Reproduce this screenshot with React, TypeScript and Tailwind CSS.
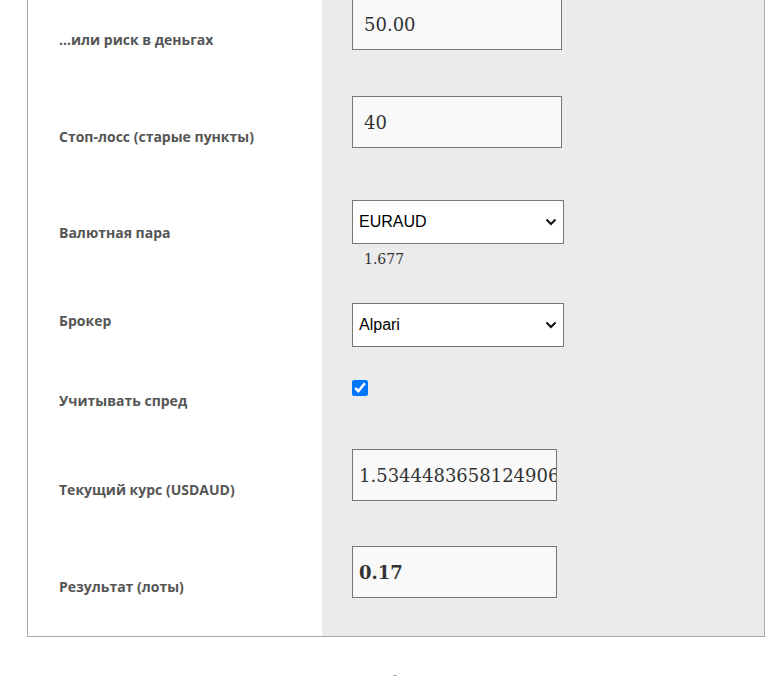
import React from "react";

const labelCls =
  "text-[14px] leading-[20px] font-bold text-[#555] [font-family:'Open_Sans',sans-serif]";
const inputCls =
  "h-[52px] border border-[#777] bg-[#f9f9f9] text-[18px] text-[#333] outline-none [font-family:'DejaVu_Serif','Liberation_Serif',serif]";
const selectCls =
  "block h-[44px] w-[212px] appearance-none border border-[#777] bg-white pl-[6px] pr-[24px] text-[16px] text-black outline-none [font-family:'Liberation_Sans',Arial,sans-serif]";

function Chevron() {
  return (
    <svg
      className="pointer-events-none absolute right-[7px] top-[18px]"
      width="12"
      height="8"
      viewBox="0 0 12 8"
    >
      <path d="M1.5 1.5 L6 6 L10.5 1.5" fill="none" stroke="#111" strokeWidth="2" />
    </svg>
  );
}

function Select({ value, options }: { value: string; options: string[] }) {
  return (
    <div className="relative w-[212px]">
      <select className={selectCls} defaultValue={value}>
        {options.map((o) => (
          <option key={o}>{o}</option>
        ))}
      </select>
      <Chevron />
    </div>
  );
}

function Row({
  h,
  labelTop,
  label,
  children,
}: {
  h: string;
  labelTop: string;
  label: string;
  children: React.ReactNode;
}) {
  return (
    <div className={`flex ${h}`}>
      <div className={`w-[294px] bg-white pl-[31px] ${labelTop}`}>
        <div className={labelCls}>{label}</div>
      </div>
      <div className="flex-1 bg-[#ebebeb] pl-[30px]">{children}</div>
    </div>
  );
}

export default function App() {
  return (
    <div className="h-[676px] overflow-hidden bg-white">
      <div className="-mt-[2px] ml-[27px] w-[738px] border-x border-b border-[#aaa]">
        <Row h="h-[98px]" labelTop="pt-[32px]" label="...или риск в деньгах">
          <input
            className={`${inputCls} w-[210px] pl-[11px]`}
            defaultValue="50.00"
          />
        </Row>
        <Row h="h-[104px]" labelTop="pt-[31px]" label="Стоп-лосс (старые пункты)">
          <input className={`${inputCls} w-[210px] pl-[11px]`} defaultValue="40" />
        </Row>
        <Row h="h-[103px]" labelTop="pt-[23px]" label="Валютная пара">
          <Select value="EURAUD" options={["EURAUD", "EURUSD"]} />
          <div className="pl-[12px] pt-[5px] text-[14px] leading-[20px] text-[#333] [font-family:'DejaVu_Serif','Liberation_Serif',serif]">
            1.677
          </div>
        </Row>
        <Row h="h-[77px]" labelTop="pt-[8px]" label="Брокер">
          <Select value="Alpari" options={["Alpari"]} />
        </Row>
        <Row h="h-[69px]" labelTop="pt-[11px]" label="Учитывать спред">
          <input
            type="checkbox"
            defaultChecked
            className="m-0 block h-4 w-4 accent-[#0075ff]"
          />
        </Row>
        <Row h="h-[97px]" labelTop="pt-[31px]" label="Текущий курс (USDAUD)">
          <input
            className={`${inputCls} w-[205px] pl-[6px]`}
            defaultValue="1.53444836581249066"
          />
        </Row>
        <Row h="h-[90px]" labelTop="pt-[31px]" label="Результат (лоты)">
          <input
            className={`${inputCls} w-[205px] pl-[6px] font-bold`}
            defaultValue="0.17"
          />
        </Row>
      </div>
      <h2 className="mt-[32px] text-center text-[20px] leading-[28px] text-[#333] [font-family:'Liberation_Serif',serif]">
        Пример формулы
      </h2>
    </div>
  );
}
